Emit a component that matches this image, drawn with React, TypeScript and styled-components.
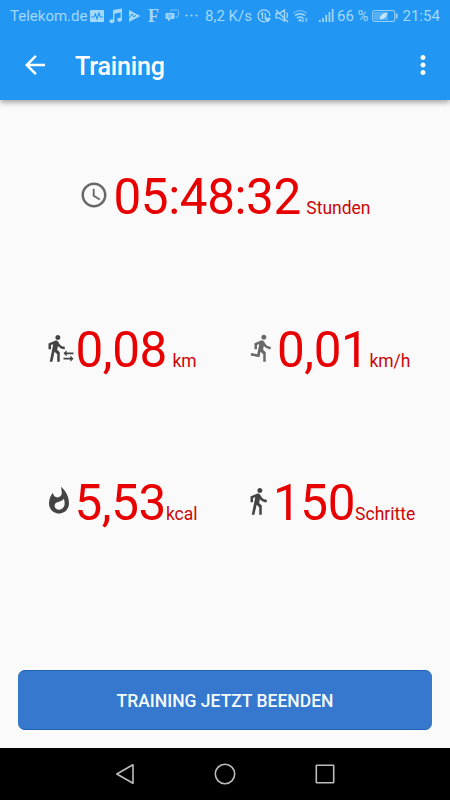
import React, { FC, ReactNode } from 'react'
import styled, { createGlobalStyle } from 'styled-components'
import {
  MdAccessTime,
  MdArrowBack,
  MdDirectionsRun,
  MdDirectionsWalk,
  MdMoreVert,
  MdTransferWithinAStation,
  MdWhatshot,
} from 'react-icons/md'

const App = () => (
  <>
    <GlobalStyle />
    <Screen>
      <Header>
        <StatusBar />
        <Toolbar>
          <IconButton aria-label="Zurück">
            <MdArrowBack size={30} />
          </IconButton>
          <Title>Training</Title>
          <IconButton aria-label="Mehr">
            <MdMoreVert size={30} />
          </IconButton>
        </Toolbar>
      </Header>
      <Stats>
        <Metric wide start={79} gap={4.5} unitGap={5.5} icon={<MdAccessTime />} value="05:48:32" unit="Stunden" />
        <Metric start={46} gap={-0.5} unitGap={5.5} dark icon={<MdTransferWithinAStation />} value="0,08" unit="km" />
        <Metric start={22} gap={0} unitGap={1} icon={<MdDirectionsRun />} value="0,01" unit="km/h" />
        <Metric start={44} gap={0.5} unitGap={0} dark icon={<MdWhatshot />} value="5,53" unit="kcal" />
        <Metric start={17.5} gap={0.5} unitGap={0} dark icon={<MdDirectionsWalk />} value="150" unit="Schritte" />
      </Stats>
      <Footer>
        <StopButton>TRAINING JETZT BEENDEN</StopButton>
      </Footer>
      <NavBar>
        <svg width="20" height="22" viewBox="0 0 20 22">
          <path d="M18 1.8v18.4L1.8 11z" />
        </svg>
        <svg width="22" height="22" viewBox="0 0 22 22">
          <circle cx="11" cy="11" r="9.7" />
        </svg>
        <svg width="20" height="22" viewBox="0 0 20 22">
          <rect x="1.3" y="2.3" width="17.4" height="17.4" rx="0.5" />
        </svg>
      </NavBar>
    </Screen>
  </>
)

export default App

type MetricProps = {
  icon: ReactNode
  value: string
  unit: string
  start: number
  gap: number
  unitGap: number
  wide?: boolean
  dark?: boolean
}

const Metric: FC<MetricProps> = ({ icon, value, unit, start, gap, unitGap, wide, dark }) => (
  <MetricBox $wide={wide} $start={start}>
    <MetricIcon $dark={dark}>{icon}</MetricIcon>
    <Value $gap={gap}>{value}</Value>
    <Unit $gap={unitGap}>{unit}</Unit>
  </MetricBox>
)

const StatusBar = () => (
  <Status>
    <StatusText $width={80}>Telekom.de</StatusText>
    <StatusIcon width="14" height="16" viewBox="0 0 14 16">
      <rect y="2" width="14" height="12" rx="1" />
      <path d="M1 9h3l1.5-3L7 11l2-6 1.5 4H13" fill="none" stroke="#2196f3" strokeWidth="1.1" />
    </StatusIcon>
    <StatusIcon $left={5} width="13" height="16" viewBox="0 0 13 16">
      <path d="M4 2l9-1.5v11h-1.4V4.6L5.4 5.8v7.4H4z" />
      <ellipse cx="2.9" cy="13.2" rx="2.5" ry="2" />
      <ellipse cx="10.5" cy="11.7" rx="2.5" ry="2" />
    </StatusIcon>
    <StatusIcon $left={6} width="13" height="16" viewBox="0 0 13 16">
      <path d="M1 2l11.3 6L1 14z" />
      <path d="M1 10l3-4 2 3 2-2" fill="none" stroke="#2196f3" />
    </StatusIcon>
    <SerifMark>F</SerifMark>
    <StatusIcon $left={5} width="15" height="16" viewBox="0 0 15 16">
      <path d="M1.5 5h7q1 0 1 1v4q0 1-1 1H5.5L3 13.5V11H1.5q-1 0-1-1V6q0-1 1-1z" />
      <path d="M5.5 4V3q0-1 1-1h6q1 0 1 1v4q0 1-1 1v2l-2-2" fill="none" stroke="#a4d8fa" strokeOpacity="0.6" />
      <path d="M2.5 7h5M2.5 9h4" stroke="#2196f3" strokeWidth="0.7" />
    </StatusIcon>
    <StatusIcon $left={5} width="13" height="16" viewBox="0 0 13 16">
      <circle cx="1.5" cy="7.5" r="1.1" />
      <circle cx="6.5" cy="7.5" r="1.1" />
      <circle cx="11.5" cy="7.5" r="1.1" />
    </StatusIcon>
    <StatusText $left={7} $width={52}>8,2 K/s</StatusText>
    <StatusIcon width="14" height="16" viewBox="0 0 14 16">
      <path d="M13 8A6 6 0 1 0 8 13.7" fill="none" stroke="#a4d8fa" strokeWidth="1.3" />
      <path d="M5.5 11V5L4 6.5M8.3 5v6l1.5-1.5" fill="none" stroke="#a4d8fa" strokeWidth="1.2" />
      <path d="M8.5 14l1-4 4-.5q0 4.5-5 4.5z" />
    </StatusIcon>
    <StatusIcon $left={4} width="14" height="16" viewBox="0 0 14 16">
      <path d="M1 5.5h3L9.5 2v11L4 9.8H1zM1 2l12 12M11.5 4.5q1.8 3 .3 5.5" fill="none" stroke="#a4d8fa" strokeWidth="1.3" />
    </StatusIcon>
    <StatusIcon $left={3} width="17" height="16" viewBox="0 0 17 16">
      <path d="M1 5.2q7-5.4 14 0" fill="none" stroke="#61b7f7" strokeWidth="1.4" />
      <path d="M3 7.7q5-3.8 10 0M5 10.2q3-2.4 6 0" fill="none" stroke="#a4d8fa" strokeWidth="1.5" />
      <circle cx="8" cy="12.2" r="1.3" />
      <path d="M11 10v4m-1.5-1.5L11 14M14 14v-4m1.5 1.5L14 10" fill="none" stroke="#a4d8fa" />
    </StatusIcon>
    <StatusIcon $left={10} width="15" height="16" viewBox="0 0 15 16">
      <path d="M0 12h1.7v2H0zM3.2 10h1.7v4H3.2zM6.4 7h1.7v7H6.4zM9.6 4h1.7v10H9.6zM12.8 1h1.7v13h-1.7z" />
    </StatusIcon>
    <StatusText $left={3} $width={35}>66 %</StatusText>
    <StatusIcon width="27" height="16" viewBox="0 0 27 16">
      <rect x="0.7" y="2.6" width="22" height="10.8" rx="1.5" fill="none" stroke="#a4d8fa" strokeWidth="1" />
      <rect x="2" y="4" width="14" height="8" opacity="0.4" />
      <path d="M8 11.5Q7 6 15 4.5q0 7-6 6.5z" fill="#c6e9fd" />
      <path d="M24 5.5h1.5v5H24z" />
    </StatusIcon>
    <StatusText $left={3.5} $width={38}>21:54</StatusText>
  </Status>
)

const GlobalStyle = createGlobalStyle`
  body {
    margin: 0;
    font-family: Roboto, sans-serif;
  }
  *, *::before {
    box-sizing: border-box;
  }
`

const Screen = styled.div`
  display: flex;
  flex-direction: column;
  width: 450px;
  height: 800px;
  background: #fafafa;
`

const Header = styled.header`
  height: 100px;
  background: #2196f3;
  box-shadow: 0 2px 6px rgb(0 0 0 / 40%);
`

const Status = styled.div`
  display: flex;
  align-items: center;
  height: 32px;
  padding-left: 10px;
  color: #a4d8fa;
  overflow: hidden;
`

const StatusText = styled.span<{ $width: number; $left?: number }>`
  flex: none;
  width: ${({ $width }) => $width}px;
  margin-left: ${({ $left = 0 }) => $left}px;
  font-size: 15px;
  line-height: 32px;
  white-space: nowrap;
`

const SerifMark = styled.span`
  flex: none;
  width: 12px;
  margin-left: 7px;
  font: bold 18px/32px 'Liberation Serif', serif;
`

const StatusIcon = styled.svg<{ $left?: number }>`
  flex: none;
  margin-left: ${({ $left = 0 }) => $left}px;
  fill: currentColor;
`

const Toolbar = styled.div`
  display: flex;
  align-items: center;
  height: 68px;
  padding: 0 12px 2px 20px;
  color: #fff;
`

const IconButton = styled.button`
  display: flex;
  padding: 0;
  border: 0;
  background: none;
  color: inherit;
`

const Title = styled.h1`
  flex: 1;
  margin: 2px 0 0 25px;
  font-size: 25px;
  font-weight: 500;
  letter-spacing: -0.15px;
`

const Stats = styled.main`
  display: grid;
  grid-template-columns: 225px 225px;
  grid-auto-rows: 153px;
  flex: 1;
  padding-top: 20px;
`

const MetricBox = styled.div<{ $start: number; $wide?: boolean }>`
  display: flex;
  align-items: baseline;
  grid-column: ${({ $wide }) => ($wide ? 'span 2' : 'auto')};
  padding: 47px 0 0 ${({ $start }) => $start}px;
  line-height: 60px;
  white-space: nowrap;
`

const MetricIcon = styled.span<{ $dark?: boolean }>`
  display: flex;
  align-self: flex-start;
  flex: none;
  margin-top: 12.5px;
  font-size: 30px;
  color: ${({ $dark }) => ($dark ? '#444' : '#686868')};
`

const Value = styled.span<{ $gap: number }>`
  margin-left: ${({ $gap }) => $gap}px;
  font-size: 49.4px;
  letter-spacing: -0.4px;
  color: #e80000;
`

const Unit = styled.span<{ $gap: number }>`
  margin-left: ${({ $gap }) => $gap}px;
  font-size: 17.5px;
  color: #cc0505;
`

const Footer = styled.footer`
  padding: 0 18px 18px;
`

const StopButton = styled.button`
  display: block;
  width: 100%;
  height: 60px;
  padding-top: 2px;
  border: 0;
  border-top: 1px solid #1c62b5;
  border-bottom: 1px solid #1c62b5;
  border-radius: 7px;
  background: #3678cd;
  color: #f4fbff;
  font: 500 17.5px Roboto, sans-serif;
`

const NavBar = styled.nav`
  display: flex;
  align-items: center;
  justify-content: center;
  gap: 79px;
  height: 52px;
  svg {
    fill: none;
    stroke: #bdbdbd;
    stroke-width: 1.6;
    stroke-linejoin: round;
  }
  background: #000;
`
